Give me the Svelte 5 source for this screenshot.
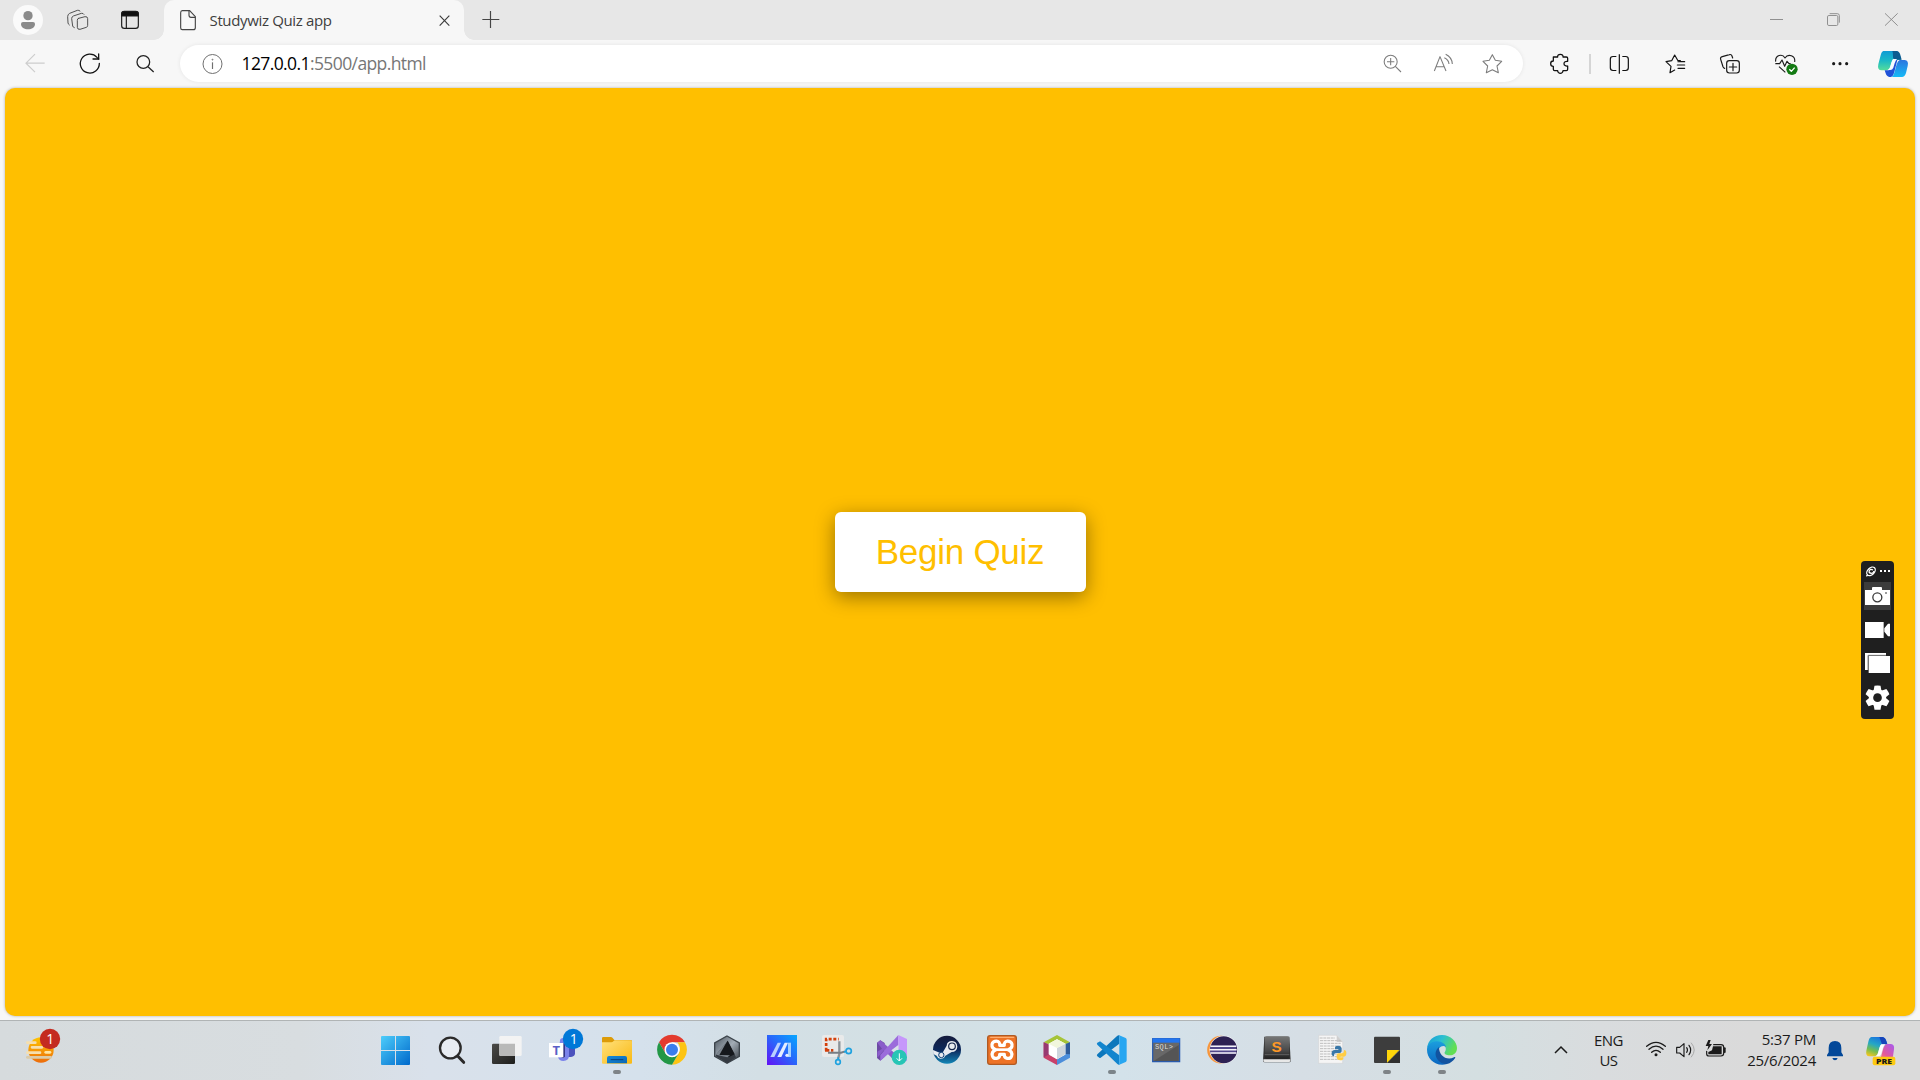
<script>
  // Every taskbar icon sits in a 55px cell, drawn at 3 units per pixel.
  // The strip is drawn in three sheets, each with its own x origin.
  const cell = 165;
  const sheetA = (i) => `${24 + cell * i} 30 ${cell} 180`;
  const sheetB = (i) => `${24 + cell * i - 1140} 30 ${cell} 180`;
  const sheetC = (i) => `${24 + cell * i - 2280} 30 ${cell} 180`;
  const pageRows = [92, 100, 108, 116, 124, 132, 140, 148];
</script>

<div class="desktop">
  <header class="tabs">
    <svg width="56" height="40" viewBox="0 0 168 120">
      <circle cx="84" cy="60" r="45" fill="#fafafa" />
      <circle cx="84" cy="47" r="14" fill="#8b8b8b" />
      <path d="M63 72q0-6 6-6h30q6 0 6 6c0 10-10 16-21 16s-21-6-21-16z" fill="#8b8b8b" />
    </svg>
    <svg width="50" height="40" viewBox="168 0 150 120" fill="none" stroke="#4c4c4c" stroke-width="2.900" stroke-linejoin="round" stroke-linecap="round">
      <path d="M236 55l19-5q8-1 8 6v20q0 5-4 6l-19 6q-8 1-8-6V61q-1-5 4-6z" />
      <path d="M223 83q-4-1-5-5l-3-22q0-6 5-8l24-8q6-1 8 3" />
      <path d="M208 75q-3-2-4-6l-1-19q0-7 6-10l23-9q5-1 8 2" />
    </svg>
    <svg width="58" height="40" viewBox="318 0 174 120" fill="none" stroke="#1c1c1c" stroke-width="3.5">
      <rect x="365" y="35" width="50" height="50" rx="8" />
      <path d="M365 48v-6q0-8 8-8h34q8 0 8 8v6z" fill="#111" />
      <path d="M379 48v37" />
    </svg>
    <div class="tab">
      <svg width="44" height="40" viewBox="492 0 132 120" fill="none" stroke="#444" stroke-width="3.4" stroke-linejoin="round">
        <path d="M547 32h22l17 18v33q0 6-6 6h-33q-5 0-5-6V38q0-6 5-6z" /><path d="M567 32v14q0 6 6 6h13" />
      </svg>
      <span class="title">Studywiz Quiz app</span>
      <svg class="end" width="40" height="40" viewBox="1272 0 120 120" fill="none" stroke="#3b3b3b" stroke-width="3.4">
        <path d="M1319 47l29 30m0-30l-29 30" />
      </svg>
    </div>
    <svg width="56" height="40" viewBox="1392 0 168 120" stroke="#454545" stroke-width="3.5"><path d="M1447 58.500h51M1471.500 33v51" /></svg>
    <svg class="end" width="180" height="40" viewBox="300 0 540 120" fill="none" stroke="#898989" stroke-width="2.800">
      <path d="M390 58.500h39" />
      <rect x="562.500" y="46.500" width="31" height="30" rx="4" />
      <path d="M569 41h23q6 0 6 6v21" />
      <path d="M735 40l38 37m0-37l-38 37" />
    </svg>
  </header>

  <nav class="toolbar">
    <svg width="60" height="48" viewBox="0 120 180 144" fill="none" stroke="#cdcdcd" stroke-width="3.500"><path d="M134 189.500H77m28-27l-27 27 27 27" /></svg>
    <svg width="60" height="48" viewBox="180 120 180 144" fill="none" stroke="#111" stroke-width="3.800" stroke-linecap="round">
      <path d="M298 190a28.500 28.500 0 1 1-7-18l5 5" /><path d="M296 162v15h-17" />
    </svg>
    <svg width="60" height="48" viewBox="360 120 180 144" fill="none" stroke="#222" stroke-width="3.800"><circle cx="430" cy="186" r="19" /><path d="M444 200l17 16" /></svg>
    <div class="address">
      <svg width="62" height="37" viewBox="540 135 186 111" fill="none" stroke="#707070" stroke-width="3">
        <circle cx="637.500" cy="192" r="28.500" /><path d="M637.500 187v20" stroke-width="3.500" /><circle cx="637.500" cy="179" r="1.400" />
      </svg>
      <span class="url"><b>127.0.0.1</b>:5500/app.html</span>
      <svg class="end" width="153" height="37" viewBox="0 135 459 111" fill="none" stroke="#7c7c7c" stroke-width="3.200" stroke-linejoin="round">
        <circle cx="62" cy="185" r="19.500" /><path d="M76 199l17 17M51 185h22M62 174v22" />
        <path d="M193 213l17-43 18 43M199 200h23M223 173q13 6 14 19M227 163q19 9 20 29" />
        <path d="M367 164l9 17 19 3-14 14 4 20-18-9-18 9 4-20-14-14 19-3z" />
      </svg>
    </div>
    <svg width="57" height="48" viewBox="459 120 171 144" fill="none" stroke="#111" stroke-width="3.800" stroke-linejoin="round">
      <path d="M550 171h13c-1-5 3-8 8-8s9 3 8 8h10q4 0 4 4v9c-6-1-11 2-11 7s5 8 11 7v10q0 4-4 4h-10c0 4-4 8-8 8s-8-4-8-8h-9q-4 0-4-4v-9c-5 0-8-3-8-8s3-8 8-8z" />
    </svg>
    <svg width="60" height="48" viewBox="630 120 180 144" fill="none" stroke="#111" stroke-width="3.600">
      <path d="M660 162v60" stroke="#cecece" stroke-width="5" />
      <path d="M748 163v58M739 169.500h-10q-8 0-8 8v26q0 8 8 8h10M757 169.500h10q8 0 8 8v26q0 8-8 8h-10" />
    </svg>
    <svg width="60" height="48" viewBox="0 120 180 144" fill="none" stroke="#111" stroke-width="3.500" stroke-linejoin="round" stroke-linecap="round">
      <path d="M104 210l-14 8 3-19-15-14 17-3 9-17 9 16 8 1M114 185h20M112 195h22M114 205h20" />
    </svg>
    <svg width="60" height="48" viewBox="180 120 180 144" fill="none" stroke="#1a1a1a" stroke-width="3.600" stroke-linecap="round">
      <rect x="260" y="182" width="38" height="37" rx="8" /><path d="M279 190v22M268 201h22" />
      <path d="M278 174l-2-6q-2-6-8-4l-21 6q-7 2-5 8l7 22q2 4 5 5" />
    </svg>
    <svg width="60" height="48" viewBox="360 120 180 144" fill="none" stroke="#1a1a1a" stroke-width="3.400" stroke-linejoin="round">
      <path d="M407 185c-2-20 20-25 28-11 9-14 32-8 29 12M406 191h13l7-11 8 19 7-15 6 7h5M417 200l19 17" />
      <circle cx="456" cy="208" r="17" fill="#137a13" stroke="none" /><path d="M448 208l6 6 10-11" stroke="#fff" stroke-width="4" />
    </svg>
    <svg width="40" height="48" viewBox="540 120 120 144" fill="#1a1a1a"><circle cx="581" cy="191" r="4.700" /><circle cx="600" cy="191" r="4.700" /><circle cx="620" cy="191" r="4.700" /></svg>
    <svg width="60" height="48" viewBox="660 120 180 144">
      <defs>
        <linearGradient id="cpA" x1="0" y1="0" x2="0" y2="1"><stop offset="0" stop-color="#109bd5" /><stop offset=".5" stop-color="#1bb9c6" /><stop offset="1" stop-color="#55dd9b" /></linearGradient>
        <linearGradient id="cpB" x1="0" y1="0" x2="0" y2="1"><stop offset="0" stop-color="#2d75df" /><stop offset="1" stop-color="#16baf6" /></linearGradient>
      </defs>
      <path d="M730 153h38q10 1 13 18l2 9h-20q-7 1-9 9l-4 13q-3 9-12 9h-13q-14 0-10-18l7-27q3-12 8-13z" fill="url(#cpA)" />
      <path d="M757 153h14q8 2 11 15l3 11h-19q-8-1-7-12 0-10-2-14z" fill="#0c5c91" />
      <path d="M734 211h12q6-1 9-11l3-10 5-10h9l-7 28q-4 22-12 23h-5q-8-1-11-11z" fill="#2052d8" />
      <path d="M779 180h15q13 1 9 18l-5 21q-4 12-12 12h-32q6-2 9-13l7-25q3-11 9-13z" fill="url(#cpB)" />
      <path d="M759 177h12q-4 4-7 13l-4 13q-3 7-9 7h-8q6-3 8-10l3-12q2-8 5-11z" fill="#f8fbff" />
    </svg>
  </nav>

  <main class="browser">
    <section class="page">
      <button class="begin">Begin Quiz</button>
    </section>
  </main>

  <footer class="taskbar">
    <svg width="368" height="60" viewBox="0 60 1104 180">
      <defs><linearGradient id="sun" x1="0" y1="0" x2="0" y2="1"><stop offset="0" stop-color="#ffc400" /><stop offset="1" stop-color="#ec6c0c" /></linearGradient></defs>
      <circle cx="123" cy="150" r="38" fill="url(#sun)" />
      <g stroke="#f6dfae" stroke-width="8" stroke-linecap="round"><path d="M82 128h24M96 142h30M82 158h38" /><path d="M137 157h13" stroke="#ffe4a0" /><path d="M82 172h70" stroke="#dccba8" /></g>
      <circle cx="150" cy="117" r="30.500" fill="#c42b20" />
      <text x="151" y="132" font-size="42" fill="#fff" text-anchor="middle">1</text>
    </svg>

    <!-- Start -->
    <svg class="app" viewBox={sheetA(0)}>
      <defs><linearGradient id="win" gradientUnits="userSpaceOnUse" x1="63" y1="78" x2="150" y2="165"><stop offset="0" stop-color="#4dcdfb" /><stop offset="1" stop-color="#0069cb" /></linearGradient></defs>
      <path fill="url(#win)" d="M65 78h40v42H63V80zM108 78h40l2 2v40h-42zM63 123h42v42H65l-2-2zM108 123h42v40l-2 2h-40z" />
    </svg>
    <!-- Search -->
    <svg class="app" viewBox={sheetA(1)} fill="none" stroke="#2b2a2a">
      <circle cx="271" cy="114" r="31" fill="#e8ecf2" stroke-width="7" /><path d="M293 138l18 19" stroke-width="9" stroke-linecap="round" />
    </svg>
    <!-- Task view -->
    <svg class="app" viewBox={sheetA(2)}>
      <defs><linearGradient id="tv" x1="0" y1="0" x2="1" y2="1"><stop offset="0" stop-color="#4a4a48" /><stop offset="1" stop-color="#1e1e1c" /></linearGradient></defs>
      <rect x="396" y="101" width="69" height="61" rx="4" fill="url(#tv)" />
      <rect x="418" y="78" width="67" height="60" rx="4" fill="#f3f3f3" />
      <path d="M418 101h47v37h-43q-4 0-4-4z" fill="#b9b9b8" />
    </svg>
    <!-- Teams -->
    <svg class="app" viewBox={sheetA(3)}>
      <path d="M622 110h23v20q0 10-12 11h-11z" fill="#4b52bd" /><path d="M600 92q0-8 10-8h17v52q0 17-17 17-13 0-16-12z" fill="#7b83eb" />
      <path d="M605 100h10v40q-4 4-10 4z" fill="#343787" />
      <rect x="567" y="99" width="43" height="43" fill="#fff" />
      <text x="589" y="134" font-size="39" font-weight="700" fill="#5a5fc7" text-anchor="middle">T</text>
      <circle cx="639" cy="87" r="30.500" fill="#0078d7" />
      <text x="641" y="102" font-size="42" fill="#fff" text-anchor="middle">1</text>
    </svg>
    <!-- Files -->
    <svg class="app" viewBox={sheetA(4)}>
      <defs>
        <linearGradient id="fold" x1="0" y1="0" x2="1" y2="1"><stop offset="0" stop-color="#ffe17c" /><stop offset="1" stop-color="#f9b913" /></linearGradient>
        <linearGradient id="foldB" x1="0" y1="0" x2="1" y2="1"><stop offset="0" stop-color="#1389da" /><stop offset="1" stop-color="#0a66b4" /></linearGradient>
      </defs>
      <path d="M726 84q0-3 4-3h22q4 0 6 3l5 6h49q4 0 4 4v20h-90z" fill="#dc9b08" />
      <path d="M726 97h28q4 0 6-3l4-3h48q4 0 4 4v63q0 3-3 3h-84q-3 0-3-3z" fill="url(#fold)" />
      <path d="M741 160v-16q0-6 6-6h48q6 0 6 6v16z" fill="url(#foldB)" /><path d="M752 149h38" stroke="#08407c" stroke-width="3" />
      <rect x="759" y="180" width="24" height="12" rx="6" fill="#7e8387" />
    </svg>
    <!-- Chrome -->
    <svg class="app" viewBox={sheetA(5)}>
      <path d="M897 97a45 45 0 0 1 78 0h-39l-19 34z" fill="#e33b2e" />
      <path d="M975 97a45 45 0 0 1-39 67l20-34q10-16-4-33z" fill="#fdc413" />
      <path d="M897 97a45 45 0 0 0 39 67l20-34q-10 14-24 10-10-3-15-9z" fill="#229746" />
      <circle cx="936" cy="119" r="22.500" fill="#fff" /><circle cx="936" cy="119" r="18" fill="#3b7ded" />
    </svg>
    <!-- Armoury -->
    <svg class="app" viewBox={sheetA(6)}>
      <defs><linearGradient id="hex" x1="0" y1="0" x2="1" y2="1"><stop offset="0" stop-color="#4a535c" /><stop offset=".5" stop-color="#a3adb6" /><stop offset="1" stop-color="#30363d" /></linearGradient></defs>
      <path d="M1101 78l37 21v40l-37 21-37-21V99z" fill="url(#hex)" stroke="#3c444b" stroke-width="4" />
      <path d="M1068 134l35-42 25 50-26 18-35-21z" fill="#343a41" />
      <path d="M1103 92l21 41-17 8-29-6z" fill="#15181c" />
      <path d="M1068 134l33-41-23 42 32 1-8 6z" fill="#7c858e" />
    </svg>
    <!-- MyASUS -->
    <svg class="app" viewBox={sheetB(7)}>
      <defs><linearGradient id="asus" x1="0" y1="1" x2="1" y2="0"><stop offset="0" stop-color="#6411f5" /><stop offset=".5" stop-color="#2a64fb" /><stop offset="1" stop-color="#06a8ff" /></linearGradient></defs>
      <rect x="81" y="75" width="90" height="90" fill="url(#asus)" />
      <path d="M91 141l22-43h10l-20 43z" fill="#b9cfff" /><path d="M112 141l22-43h10l-20 43z" fill="#e5edff" /><path d="M144 98h9v43h-9z" fill="#a5d1ff" /><circle cx="141" cy="136" r="5" fill="#e5edff" />
    </svg>
    <!-- Snipping tool -->
    <svg class="app" viewBox={sheetB(8)} fill="none">
      <rect x="246" y="75" width="66" height="66" rx="6" fill="#e9eaea" />
      <path d="M258.500 122V87.500H296" stroke="#d4400b" stroke-width="8" stroke-dasharray="9 5" /><path d="M255 121h13M273 121h7" stroke="#d4400b" stroke-width="8" />
      <path d="M298 94v38l-4 15" stroke="#8c9398" stroke-width="7" /><path d="M264 128h39l12-4" stroke="#777e84" stroke-width="6" />
      <circle cx="326" cy="123" r="8" stroke="#1fa2df" stroke-width="5" /><circle cx="294" cy="156" r="7" stroke="#1fa2df" stroke-width="5" /><path d="M312 126l7-2M295 147v-5" stroke="#1fa2df" stroke-width="5" />
    </svg>
    <!-- Visual Studio Installer -->
    <svg class="app" viewBox={sheetB(9)}>
      <path d="M411 98l10-7 13 8v41l-13 12-10-8z" fill="#6d4aa5" />
      <path d="M421 91l54 47v25l-43-42-20 22v-18l14-9-14-18z" fill="#8a5cca" />
      <path d="M475 75l-54 60v17l54-46z" fill="#9b6cdb" /><path d="M475 75l26 12v65l-26 11z" fill="#c697fb" /><path d="M475 105v34l-21-18z" fill="#d8e2e8" />
      <circle cx="478" cy="142" r="23" fill="#27c5b5" /><path d="M478 130v23m-8-8l8 8 8-8" fill="none" stroke="#fff" stroke-width="3" />
    </svg>
    <!-- Steam -->
    <svg class="app" viewBox={sheetB(10)}>
      <defs><linearGradient id="steam" x1="0" y1="0" x2="0" y2="1"><stop offset="0" stop-color="#151b3c" /><stop offset=".5" stop-color="#0c285b" /><stop offset="1" stop-color="#1287b8" /></linearGradient></defs>
      <circle cx="621" cy="119.500" r="42" fill="url(#steam)" />
      <path d="M579 120l27 11 14-24q1-14 16-14 15 1 16 17-1 15-17 16l-20 12q-3 9-14 8-8-1-11-9l-10-5q-1-8-1-12z" fill="#e7ebf0" />
      <circle cx="636" cy="109" r="10" fill="#e7ebf0" stroke="#14254c" stroke-width="3.500" /><circle cx="604" cy="135" r="8" fill="#e7ebf0" stroke="#14447a" stroke-width="3" />
    </svg>
    <!-- XAMPP -->
    <svg class="app" viewBox={sheetB(11)} fill="none">
      <rect x="743" y="77" width="86" height="86" rx="7" fill="#ee7326" stroke="#b05a23" stroke-width="4" /><path d="M752 82h69" stroke="#ffae70" stroke-width="4" stroke-linecap="round" />
      <path d="M779 106h14c-3-17 21-16 23-3 1 8-5 14-12 16 8 3 13 10 11 18-4 13-24 10-22-4h-14c2 14-18 17-22 4-2-8 3-15 11-18-7-2-13-8-12-16 2-13 26-14 23 3z" stroke="#fff" stroke-width="9.500" stroke-linejoin="round" />
      <path d="M770 119h32" stroke="#fff" stroke-width="8" />
    </svg>
    <!-- NetBeans -->
    <svg class="app" viewBox={sheetB(12)}>
      <path d="M951 75l39 22-11 6-28-15-26 15-14-6z" fill="#a6c438" /><path d="M911 97l17 7v31l23 13v17l-40-22z" fill="#c9416a" />
      <path d="M911 97l17 7v29l-17 9z" fill="#983a71" /><path d="M990 97v46l-39 22v-17l25-14v-31z" fill="#4c8edb" /><path d="M990 97v36l-14-1v-29z" fill="#2f5d9b" />
      <path d="M951 88l25 13v32l-25 15-25-15v-32z" fill="#fff" /><path d="M951 114l25-13v32l-25 15z" fill="#cdd5dc" /><path d="M951 114l-25-13 25-13 25 13z" fill="#f1f6dd" />
    </svg>
    <!-- VS Code -->
    <svg class="app" viewBox={sheetB(13)}>
      <path d="M1072 139q-3-3 0-6l60-56q3-2 6-1v25l-56 42q-2 2-4 0z" fill="#0c77bc" />
      <path d="M1072 98q-3 3 0 6l60 58q3 3 6 2v-28l-56-41q-2-2-4 0z" fill="#1285ce" />
      <path d="M1136 75l21 9q3 2 3 5v62q0 4-3 5l-21 9q2-2 2-5V80q0-4-2-5z" fill="#27a6f1" />
      <rect x="1104" y="180" width="24" height="12" rx="6" fill="#7b8489" />
    </svg>
    <!-- SQL prompt -->
    <svg class="app" viewBox={sheetC(14)}>
      <rect x="98" y="86" width="81" height="69" fill="#686868" stroke="#2155ae" stroke-width="3.500" /><rect x="98" y="85" width="81" height="13" fill="#2375ee" />
      <path d="M101 153l75-48v48z" fill="#555" />
      <text class="mono" x="105" y="116" font-size="21" fill="#ddd" textLength="54">SQL&gt;</text>
    </svg>
    <!-- Eclipse -->
    <svg class="app" viewBox={sheetC(15)}>
      <circle cx="303" cy="119" r="41.500" fill="#f7963c" /><circle cx="311" cy="119" r="42" fill="#fff" /><circle cx="311" cy="119" r="40.500" fill="#2d2153" />
      <path d="M271 107h78v24h-78z" fill="#51478a" /><path d="M271 109h78M269 119h81M271 129h78" stroke="#f5f4fa" stroke-width="4.500" />
    </svg>
    <!-- Sublime Text -->
    <svg class="app" viewBox={sheetC(16)}>
      <defs><linearGradient id="subl" x1="0" y1="0" x2="0" y2="1"><stop offset="0" stop-color="#777" /><stop offset=".65" stop-color="#484848" /><stop offset="1" stop-color="#222" /></linearGradient></defs>
      <path d="M433 80h75l4 73q0 4-4 4h-74q-5 0-5-4z" fill="#313131" /><path d="M430 148h81v5q0 3-4 3h-73q-4 0-4-3z" fill="#e7e7e7" />
      <rect x="434" y="79" width="74" height="67" rx="6" fill="url(#subl)" /><path d="M434 134h74" stroke="#888" stroke-width="1.500" />
      <text class="sans" x="470" y="125" font-size="46" font-weight="700" fill="#fc9827" text-anchor="middle">S</text>
    </svg>
    <!-- Python file -->
    <svg class="app" viewBox={sheetC(17)}>
      <path d="M596 76h54l18 20v64h-72z" fill="#f5f5f5" stroke="#d0d0d0" stroke-width="1.500" /><path d="M650 76v20h18z" fill="#cfcfcf" />
      {#each pageRows as y}<path d="M600 {y}h62" stroke="#bdbdbd" stroke-width="3" stroke-dasharray="9 2" />{/each}
      <path d="M599 84h46" stroke="#bdbdbd" stroke-width="3" stroke-dasharray="9 2" />
      <path d="M645 113q0-6 9-6t11 7v10q0 5-6 5h-11q-6 0-6 9-8 0-7-10 1-8 9-8h11v-2h-10z" fill="#3977a8" />
      <path d="M670 145q0 6-9 6t-11-7v-9q0-5 6-5h10q6 0 6-10 8 0 7 11-1 9-9 9h-11v2h11z" fill="#ffcd43" />
    </svg>
    <!-- Sticky Notes -->
    <svg class="app" viewBox={sheetC(18)}>
      <path d="M765 80h72q3 0 3 3v37l-38 39h-37q-3 0-3-3V83q0-3 3-3z" fill="#3d3d3d" /><path d="M840 120v39h-39z" fill="#303030" /><path d="M801 120h37l-37 38z" fill="#ffd60a" />
      <rect x="789" y="180" width="24" height="12" rx="6" fill="#7e8387" />
    </svg>
    <!-- Edge -->
    <svg class="app" viewBox={sheetC(19)}>
      <defs>
        <linearGradient id="edA" x1="0" y1="0" x2="1" y2=".4"><stop offset="0" stop-color="#159bd7" /><stop offset=".5" stop-color="#2cbfd2" /><stop offset="1" stop-color="#62df52" /></linearGradient>
        <linearGradient id="edB" x1="0" y1="0" x2="0" y2="1"><stop offset="0" stop-color="#1b9ede" /><stop offset="1" stop-color="#0b67c1" /></linearGradient>
      </defs>
      <path d="M921 116c2-25 20-41 45-41 27 0 45 21 45 39 0 15-10 22-22 22-10 0-17-4-15-9 8-12 2-24-15-29-17-4-32 4-38 18z" fill="url(#edA)" />
      <path d="M921 119c0-14 14-26 30-25 16 0 26 10 27 17-12-8-25 3-24 18 1 16 12 29 27 33-34 9-60-15-60-43z" fill="url(#edB)" />
      <path d="M957 111c-23 19-4 52 24 51 11-2 18-9 24-17 2-3 0-5-3-3-23 12-46-7-45-31z" fill="#1253a0" />
      <rect x="954" y="180" width="24" height="12" rx="6" fill="#7e8387" />
    </svg>

    <div class="tray">
      <svg width="55" height="60" viewBox="0 60 165 180" fill="none" stroke="#1b1b1b" stroke-width="4.500"><path d="M75 159l18-18 18 18" /></svg>
      <div class="lang"><span>ENG</span><span>US</span></div>
      <svg width="95" height="60" viewBox="330 60 285 180" fill="none" stroke="#1b1b1b" stroke-width="4" stroke-linecap="round">
        <path d="M350 139q28-24 56 0M357 148q21-19 42 0M365 157q13-12 26 0" /><circle cx="378" cy="164" r="4.500" fill="#1b1b1b" stroke="none" />
        <path d="M440 142h9l13-11v39l-13-11h-9z" stroke-width="3.500" stroke-linejoin="round" /><path d="M470 143q5 7 0 14M477 136q10 14 0 28" stroke-width="3.500" /><path d="M484 129q18 21 0 42" stroke="#aaa" stroke-width="3" />
        <path d="M551 134h22q8 0 8 8v18q0 8-8 8h-36q-7 0-7-7v-7" stroke-width="3.600" /><path d="M549 139h26v24h-40v-7l11-5z" fill="#1b1b1b" stroke="none" /><path d="M584 145v11" stroke-width="6" />
        <path d="M535 120l-8 18h8l-3 13 14-19h-8l4-12z" fill="#1b1b1b" stroke="none" />
      </svg>
      <div class="clock"><span>5:37 PM</span><span>25/6/2024</span></div>
      <svg width="44" height="60" viewBox="858 60 132 180" fill="#034899">
        <path d="M891 169v-4l5-8v-13q0-21 19-21t19 21v13l5 8v4zM907 174h16q-2 7-8 7t-8-7z" />
      </svg>
      <svg width="60" height="60" viewBox="990 60 180 180">
        <defs>
          <linearGradient id="prA" x1=".6" y1="0" x2=".2" y2="1"><stop offset="0" stop-color="#1972df" /><stop offset=".4" stop-color="#25a7c5" /><stop offset=".7" stop-color="#73bd51" /><stop offset="1" stop-color="#f4c61d" /></linearGradient>
          <linearGradient id="prB" x1="1" y1="0" x2="0" y2="1"><stop offset="0" stop-color="#a65af0" /><stop offset=".6" stop-color="#e3599b" /><stop offset="1" stop-color="#ff9060" /></linearGradient>
        </defs>
        <path d="M1024 111h33q9 1 12 12l3 10h-14q-7 1-9 8l-5 18q-3 10-12 10h-14q-12-1-9-17l6-27q3-13 9-14z" fill="url(#prA)" />
        <path d="M1048 111h10q8 2 11 12l3 10h-16z" fill="#1745ba" />
        <path d="M1070 132h13q11 1 9 16l-3 21q-2 12-12 12h-32q6-3 9-14l6-22q3-11 10-13z" fill="url(#prB)" />
        <path d="M1054 133h12q-5 3-7 10l-5 17q-2 9-10 9h-7q5-2 7-10l5-17q2-8 5-9z" fill="#fff" />
        <rect x="1028" y="170" width="68" height="26" rx="6" fill="#fdc910" />
        <text class="pre" x="1062" y="190.500" font-size="23" text-anchor="middle" textLength="48" lengthAdjust="spacingAndGlyphs">PRE</text>
      </svg>
    </div>
  </footer>

  <aside class="capture">
    <svg width="33" height="158" viewBox="63 33 99 474" fill="#fff">
      <g fill="none" stroke="#fff" stroke-width="4"><ellipse cx="93" cy="64" rx="15" ry="10" transform="rotate(-45 93 64)" /><path d="M99 60q-8-5-11 2t6 8q7 0 8-7M79 79l5-5" /></g>
      <path d="M120 60h6v6h-6zM132 60h6v6h-6zM144 60h6v6h-6z" />
      <rect x="72" y="96" width="81" height="84" fill="#3c3c3c" />
      <path d="M75 120h21v-6q0-3 3-3h24q3 0 3 3v6h24v45H75z" /><circle cx="112" cy="142" r="13.500" fill="none" stroke="#3c3c3c" stroke-width="4" /><path d="M135 129h6" stroke="#3c3c3c" stroke-width="3" />
      <path d="M75 216h56v48H75zM133 235l11-14h6v38h-6l-11-14z" />
      <path d="M75 309h63v6H84v45h-9z" /><path d="M86 318h64v51H86z" /><path d="M84 360v-44h54" stroke="#888" stroke-width="3" fill="none" />
      <g transform="translate(112.500 443)">
        <circle r="26" />
        {#each [0, 60, 120, 180, 240, 300] as a}<path d="M-9-36Q0-37 9-36L12-20H-12z" transform="rotate({a})" />{/each}
        <circle r="13" fill="#1f1f1f" />
      </g>
    </svg>
  </aside>
</div>

<style>
  :global(body) { margin: 0; overflow: hidden; }
  .desktop { position: relative; width: 1920px; height: 1080px; display: flex; flex-direction: column; background: #f7f7f7; font-family: "Open Sans", "Noto Sans", sans-serif; overflow: hidden; }
  svg { display: block; flex: none; }
  .end { margin-left: auto; }
  .tabs { height: 40px; display: flex; background: #e7e7e7; }
  .tab { position: relative; width: 300px; height: 40px; display: flex; align-items: center; background: #f7f7f7; border-radius: 10px 10px 0 0; }
  .tab::before, .tab::after { content: ""; position: absolute; bottom: 0; width: 10px; height: 10px; }
  .tab::before { left: -10px; background: radial-gradient(circle at 0 0, transparent 9.5px, #f7f7f7 10px); }
  .tab::after { right: -10px; background: radial-gradient(circle at 100% 0, transparent 9.5px, #f7f7f7 10px); }
  .title { margin-left: 1.500px; font-size: 15px; letter-spacing: -0.350px; color: #3e3e3e; white-space: nowrap; line-height: 40px; }
  .toolbar { height: 48px; display: flex; }
  .address { width: 1343px; height: 37px; margin-top: 5px; display: flex; align-items: center; background: #fff; border-radius: 19px; box-shadow: 0 0 4px rgba(0, 0, 0, .08); }
  .url { margin-left: -0.500px; font-size: 17.500px; letter-spacing: -0.600px; color: #767676; white-space: nowrap; line-height: 37px; }
  .url b { font-weight: 400; color: #000; }
  .browser { height: 932px; padding: 0 5px; box-sizing: border-box; }
  .page { height: 928px; display: flex; align-items: center; justify-content: center; background: #ffbf00; border-radius: 10px; box-shadow: 0 0 3px rgba(0, 0, 0, .3); }
  .begin { width: 251px; height: 80px; padding: 0; border: 0; border-radius: 6px; background: #fff; color: #ffbf00; font: 35px "Liberation Sans", Arial, sans-serif; letter-spacing: -0.250px; box-shadow: 0 5px 20px rgba(0, 0, 0, .4); }
  .taskbar { height: 60px; box-sizing: border-box; display: flex; background: linear-gradient(90deg, #d6dbdd 0, #d8dde0 300px, #d9e1eb 430px, #d5e1ec 640px, #d3dfe5 760px, #d3e0e4 900px, #d3e2ea 1120px, #d6dee5 1300px, #d4dfe1 1480px, #d9dcde 1600px, #dadada 1750px, #dadada 100%); box-shadow: inset 0 1px #b0b4b5; }
  .app { width: 55px; height: 60px; }
  .tray { margin-left: 62px; display: flex; color: #1b1b1b; font-size: 15px; white-space: nowrap; }
  .tray div { display: flex; flex-direction: column; justify-content: center; line-height: 20.500px; }
  .lang { width: 47px; align-items: center; letter-spacing: -0.500px; }
  .lang + svg { margin-left: 8px; }
  .tray .clock { width: 81px; align-items: flex-end; letter-spacing: -0.250px; padding-bottom: 1px; }
  .mono { font-family: "Liberation Mono", monospace; }
  .sans { font-family: "Liberation Sans", sans-serif; }
  .pre { font-weight: 800; fill: #1a1a1a; }
  .capture { position: absolute; left: 1861px; top: 561px; width: 33px; height: 158px; background: #1f1f1f; border-radius: 4px; overflow: hidden; }
</style>
